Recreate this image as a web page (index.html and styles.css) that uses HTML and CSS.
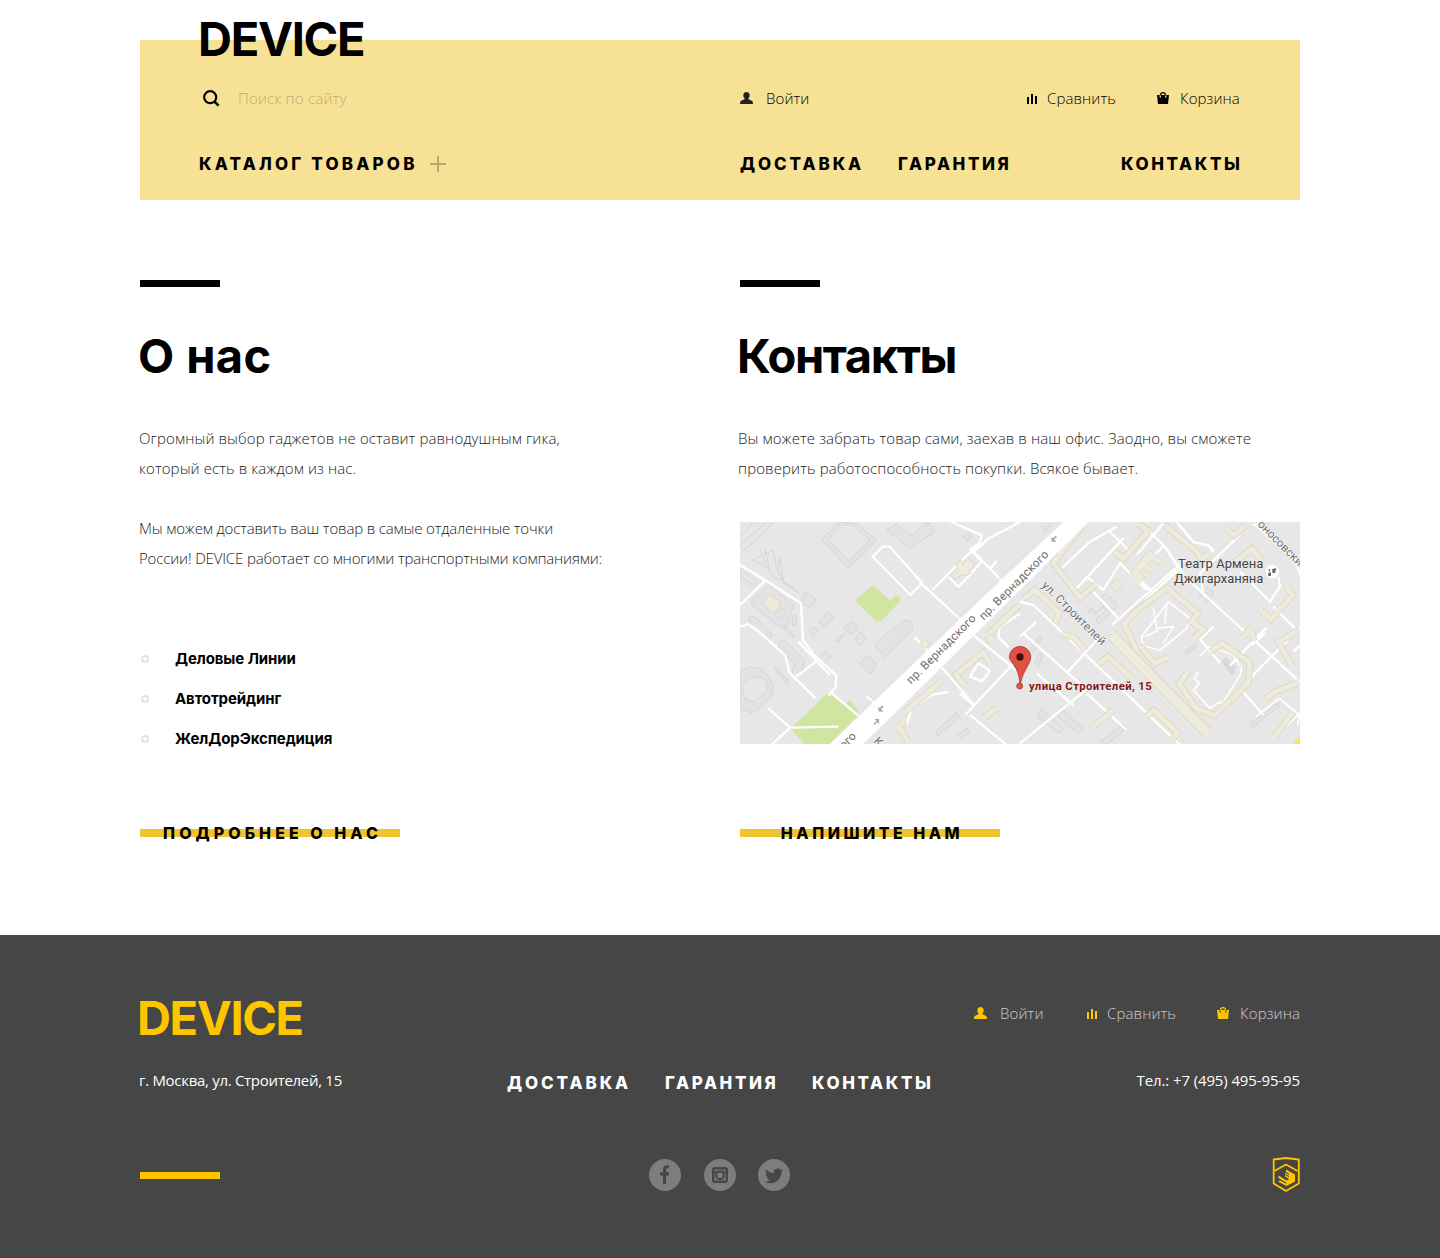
FILE: index.html
```html
<!DOCTYPE html>
<html lang="ru">
<head>
<meta charset="utf-8">
<title>DEVICE</title>
<link rel="stylesheet" href="styles.css">
</head>
<body>
<svg class="sprite" width="0" height="0">
  <symbol id="user" viewBox="0 0 13 12"><path d="M6.500 0C4.500 0 3.300 1.400 3.300 3.200c0 1.300.5 2.300 1.200 2.900v1.100C3.200 7.800.8 8.400.2 10L0 12h13l-.2-2C12.200 8.400 9.800 7.800 8.500 7.200V6.100c.7-.6 1.200-1.600 1.200-2.900C9.700 1.400 8.500 0 6.500 0z"/></symbol>
  <symbol id="bars" viewBox="0 0 10 10"><path d="M0 3h2v7H0zM4 0h2v10H4zM8 2h2v8H8z"/></symbol>
  <symbol id="bag" viewBox="0 0 12 12"><path fill-rule="evenodd" d="M0 3h2.600v2.500h1.300V3h4.200v2.500h1.300V3H12l-1 9H1z"/><path d="M3.400 3.500C3.400 1.500 4.300.6 6 .6s2.600.9 2.600 2.900" fill="none" stroke="currentColor" stroke-width="1.200"/></symbol>
</svg>
<header class="header">
  <a class="logo">DEVICE</a>
  <div class="tools">
    <label class="search"><svg width="17" height="17" viewBox="0 0 17 17"><circle cx="7.200" cy="7.200" r="6" fill="none" stroke="#000" stroke-width="2.200"/><path d="M11.300 11.300l4.300 4.300" stroke="#000" stroke-width="2.600"/></svg><span class="placeholder">Поиск по сайту</span></label>
    <a class="tool tool-login"><svg width="13" height="12"><use href="#user"/></svg><span>Войти</span></a>
    <a class="tool tool-compare"><svg width="10" height="10"><use href="#bars"/></svg><span>Сравнить</span></a>
    <a class="tool tool-cart"><svg width="12" height="12"><use href="#bag"/></svg><span>Корзина</span></a>
  </div>
  <nav class="nav">
    <a class="catalog"><span>КАТАЛОГ ТОВАРОВ</span><svg width="16" height="16" viewBox="0 0 16 16"><path d="M8 0v16M0 8h16" stroke="#b9a96e" stroke-width="2"/></svg></a>
    <a class="n-delivery">ДОСТАВКА</a>
    <a class="n-warranty">ГАРАНТИЯ</a>
    <a class="n-contacts">КОНТАКТЫ</a>
  </nav>
</header>
<main class="main">
  <section class="col">
    <h1>О нас</h1>
    <p><span class="wide">Огромный выбор гаджетов не оставит равнодушным гика,</span><br><span class="wide">который есть в каждом из нас.</span></p>
    <p class="tight">Мы можем доставить ваш товар в самые отдаленные точки<br>России! DEVICE работает со многими транспортными компаниями:</p>
    <ul class="partners">
      <li>Деловые Линии</li>
      <li>Автотрейдинг</li>
      <li>ЖелДорЭкспедиция</li>
    </ul>
    <a class="button button-about">ПОДРОБНЕЕ О НАС</a>
  </section>
  <section class="col">
    <h1 class="h-contacts">Контакты</h1>
    <p class="shift wide">Вы можете забрать товар сами, заехав в наш офис. Заодно, вы сможете<br>проверить работоспособность покупки. Всякое бывает.</p>
    <svg class="map" width="560" height="222" viewBox="0 6 1680 666">
      <defs>
        <g id="blocks">
          <path d="M1025 18L940 128l80 105 50-42M1122 95l28 22 75-85-30-20M1190 390l-38-78 40-42 88-66 94 76-20 25 36 24-34 34M1200 378l44 52 44-20M1412 395l34-25 84 58-6 62-100 97-55-22-52-75 28-35M1640 200l18 26-66 72-34-32M1482 128l54-42 32 38M1275 16l92 76 18 26 28-22M1462 28l22 18 30-28M1678 328l-62 38 38 68M1576 538l28-22 74-30M1075 432l30-22 72 66M1218 590l24-20 70 68-18 24M966 342l36 10 34 40M852 236l32-26 74 68-12 32M1062 618l60-50M1508 352l26-28M1534 330l8 32M1600 655l60-80"/>
          <path d="M742 345l98-92M672 496l-24-32 82-66 18 30M488 582l118-100M462 632l32-30M476 618l30 50M734 592l36-28"/>
        </g>
      </defs>
      <rect y="6" width="1680" height="666" fill="#e7e7e7"/>
      <!-- grey buildings -->
      <g fill="#e3e3e3" stroke="#d5d5d5" stroke-width="3">
        <path d="M244 57L300 6l50 4 60 52-85 84z"/><path fill="#e7e7e7" d="M262 58l46-44 32 1 50 47-65 60z"/>
        <path d="M440 30l70 55 74-50-20-29-14 12-36 28-45-34zM672 50l15-12 12 9-18 17z"/>
        <path fill="none" d="M0 100l60-50 40-44M40 6L0 50M0 75L80 6M40 120l60-30 10 60 20 30-25-5-20-30zM0 145l50 40-12 22-38-30zM0 165l40 32M118 112l14 75 26 14 18 20-45-32-16-35zM60 90l25 60M75 90l15 60"/>
        <path d="M36 240l50-45 75 60-20 65-30-5-75-60z"/><path d="M180 245l15-25 20 5 15 18-24 20zM105 282l20-20 16 17-25 20zM157 288h13v28h-13z"/>
        <path d="M237 306l30-31 13 18-30 29zM207 332l15-12 14 13-18 15zM312 326l25-22 20 18-22 23zM343 358l20-22 16 18-20 24zM282 362l32-20-14 22z"/>
        <path d="M404 375l25-25 66-50 20 6 4 22-85 84zM359 430l20-20 8-4 22 27-18 30z"/>
        <path d="M25 300l10-14 20 14 12 17 30 25-9 17-50-40zM126 312l38 34-5 7-38-34zM117 365l15-7 62 65-8 32-20 17-10-15 8-27-45-42zM233 418l22-23 20 14-22 24zM106 442l43 44-7 6-38-45z"/>
        <path d="M0 455l30-14 40 8 30 45-3 30-30 35-30 20-37-12z"/><path fill="#e7e7e7" d="M5 500l30-32 40 8 10 28-38 43-30-8z"/>
        <path d="M586 635l65-58 7 15-65 54zM654 646l24-21 10 10-22 21z"/>
        <path d="M1044 276l10-12 16 14 20-19-12-22 20-17 38 36-60 55-10-12 32-28-10-10-22 20zM1377 222l25-23 18 18-15 29-10-6 10-20-10-4-10 15zM1335 395l28-22 4 8-26 22zM890 590l15-25 65 60-12 14zM950 588l18-18 62 55-14 16zM860 405l40-60 6 8-38 62zM1530 612l85-64 6 8-84 66zM885 430l15-30 10 7-16 32zM1080 665l70-52 10 10-55 49z"/>
        <path fill="#d9d9d9" d="M1446 425l12-10 30 28-12 22z"/>
      </g>
      <!-- parks -->
      <path fill="#d0e5a0" d="M349 246q-2-8 5-14l38-31q7-4 14 1l43 38q9-2 18-14 16-4 13 18l-54 57q-11 8-22 0z"/>
      <path fill="#d0e5a0" d="M152 625l117-111 50 37 8-11 29 30-4 20-84 82h-75z"/>
      <!-- minor streets -->
      <g fill="none" stroke="#fff" stroke-width="7" stroke-linejoin="round">
        <path d="M0 135l75 45 108 70 6 110 30 42 70 65-2 35-22 25M0 255l75-72M0 320l24-8 30 20 82 75 12 50 78 78M168 470l60-45M85 565l65 58-65 60M175 365l95 100M268 514l90 75M150 623l145-3M380 530l25 20"/>
        <path d="M398 110l30-30 20-1 98 110-35 36zM540 187l125 115M577 210l142-142M600 -10l125 56-6 24-26 17 92 95M690 85l35 40-70 76-28-30M840 6l-95 50-50 45M525 352l40 42M770 124l-20 22"/>
        <path d="M700 345l140 115M605 442l95 110M700 555L660 520M840 410l-165 175M690 585l110 90M840 280l-62 42-2 30 30 30M500 614l15-50 60-40 50-8M690 470l25-40 35 22-24 32z"/>
        <path d="M960 150l90-85 80-45M960 150l50 55 140-150M840 245l40 10 200 190 240 230M1105 30l60 60-75 120-50-40M1140 130l80 80M850 340l180 160M840 350l50-45M980 460l90-100M1050 500l-210 170M890 460l110 95M1040 520l120 110M1115 315l220-195M1060 215l75 80"/>
        <path d="M1200 6l75 75 60 90 350 320M1310 6l50 60 45 10 15 15-25 20M1270 10l-80 95M1270 80l-90 80 60 60M1325 140l-110 100M1500 45l-120 115 10 60M1420 320l-40 38 60 70M1580 322l-110 115M1680 322L1500 505l70 80M1540 10l125 110 15 44M1600 260l80 80M1500 155l90 90 30-45-5-30M1535 375l40-35M1660 395l20-20"/>
        <path stroke-width="5" d="M1205 350l80-105 65 50-10 30-80 65-50-12zM1240 265l10 60 50-5-30 50M1255 330l-40 20M1280 250l-5 60"/>
        <path stroke-width="5" d="M1375 455l-12 20 15 15-18 20 50 55 30-20 5 10 55-90 5-20-25-40-70-25-30 28M1690 570l-90 85M1548 590l70-55 60 50-5 30"/>
      </g>
      <!-- cream buildings -->
      <use href="#blocks" class="block-edge"/><use href="#blocks" class="block-fill"/>
      <path d="M1114 345L1404 640" class="slab-edge"/><path d="M1114 345L1404 640" class="slab-fill"/>
      <g fill="#eeeadc" stroke="#dcd6bf" stroke-width="2.500">
        <path d="M69 250l18-24 32 17-2 22-22 12zM635 170q-2-19 16-21l-2-21 13-8 9 14a15 15 0 1 1 15 15l6 11-14 7-17-2a15 15 0 0 1-26 5zM540 370l15-14 13 15-15 15zM734 355l16-14 16 14-18 16z"/>
        <path d="M1169 160l60-72 36 34-14 13-15-14-11 11 15 16-11 13-18-15-10 12 14 14-16 18zM1111 196l16-16 22 15-19 22zM920 20l20-14-30 32z"/>
      </g>
      <!-- avenue -->
      <path fill="#fff" d="M270 672L720 240 970 6h75L850 200 370 672z"/>
      <path d="M290 645L780 172 952 6" fill="none" stroke="#e0e0e0" stroke-width="3"/>
      <path d="M1655 672l25-24v24z" fill="#f6e36c"/>
      <g fill="#a9aac4"><path d="M413 561l4 14 14-1-8-6 8-8-4-4-8 8zM417 596l-14 1 7 6-10 8 4 4 9-8 5 5zM933 52l2 13 14 1-6-8 8-7-4-4-8 8z"/></g>
      <g class="street">
        <text transform="translate(513 494) rotate(-45)" textLength="278">пр. Вернадского</text>
        <text transform="translate(731 302) rotate(-45)" textLength="278">пр. Вернадского</text>
        <text transform="translate(312 689) rotate(-45)">ого</text>
        <text transform="translate(904 198) rotate(45)" textLength="254">ул. Строителей</text>
        <text transform="translate(1551 15) rotate(45)">оносовски</text>
        <text transform="translate(399 665) rotate(45)">К</text>
      </g>
      <g class="place"><text x="1314" y="145" textLength="256">Театр Армена</text><text x="1302" y="190" textLength="268">Джигарханяна</text></g>
      <circle cx="1597" cy="155" r="22" fill="#fff" stroke="#ddd" stroke-width="2"/><path d="M1584 160l9-4v12h-8zM1596 148l12-4-2 14-8 2zM1584 151l7-5-2 9z" fill="#75645d"/>
      <path d="M840 504c0-65-32-77-32-93a32 32 0 0 1 64 0c0 25-27 41-32 93z" fill="#df5147" stroke="#9c3129" stroke-width="2"/><circle cx="840" cy="411" r="11" fill="#43100b"/><circle cx="839" cy="498" r="9" fill="#d75950" stroke="#8f3029" stroke-width="2"/>
      <text class="address" x="867" y="510" textLength="368">улица Строителей, 15</text>
    </svg>
    <a class="button button-write">НАПИШИТЕ НАМ</a>
  </section>
</main>
<footer class="footer">
  <div class="inner">
    <div class="ftop">
      <a class="logo">DEVICE</a>
      <div class="ftools">
        <a class="tool tool-login"><svg width="13" height="12"><use href="#user"/></svg><span>Войти</span></a>
        <a class="tool tool-compare"><svg width="10" height="10"><use href="#bars"/></svg><span>Сравнить</span></a>
        <a class="tool tool-cart"><svg width="12" height="12"><use href="#bag"/></svg><span>Корзина</span></a>
      </div>
    </div>
    <div class="fmid">
      <span class="addr">г. Москва, ул. Строителей, 15</span>
      <nav class="fnav"><a class="n-delivery">ДОСТАВКА</a><a class="n-warranty">ГАРАНТИЯ</a><a class="n-contacts">КОНТАКТЫ</a></nav>
      <span class="tel">Тел.: +7 (495) 495-95-95</span>
    </div>
    <div class="fbot">
      <i class="dash"></i>
      <div class="social">
        <svg width="32" height="32" viewBox="0 0 32 32"><circle cx="16" cy="16" r="16" fill="#7d7d7d"/><path fill="#464646" d="M14 25v-8.500h-3v-3.200h3v-2.500c0-3 1.700-4.600 4.300-4.600H20v3.100h-1.500c-1 0-1.400.5-1.400 1.400v2.600h3l-.4 3.200h-2.600V25z"/></svg>
        <svg width="32" height="32" viewBox="0 0 32 32"><circle cx="16" cy="16" r="16" fill="#7d7d7d"/><rect x="9.200" y="9.200" width="13.600" height="13.600" rx="1.500" fill="none" stroke="#464646" stroke-width="2.400"/><path d="M9 13h5M18 13h5" stroke="#464646" stroke-width="1.500"/><circle cx="16" cy="16.300" r="3.900" fill="none" stroke="#464646" stroke-width="2.200"/><path d="M18.500 9.500h4v4h-4z" fill="#464646"/><path d="M19.500 10.700h2v2h-2z" fill="#7d7d7d"/></svg>
        <svg width="32" height="32" viewBox="0 0 32 32"><circle cx="16" cy="16" r="16" fill="#7d7d7d"/><path fill="#464646" d="M25 11.200c-.7.3-1.300.5-2 .6.700-.5 1.200-1.200 1.500-2-.7.400-1.500.7-2.300.9a3.800 3.800 0 0 0-6.400 3.500c-3.100-.2-5.800-1.700-7.600-4a3.800 3.800 0 0 0 1.200 5c-.6 0-1.200-.2-1.700-.5 0 1.800 1.300 3.400 3 3.700-.5.200-1.100.2-1.700.1.500 1.500 1.900 2.600 3.500 2.600A8 8 0 0 1 7 22.700a11 11 0 0 0 5.700 1.600c7 0 10.700-5.800 10.700-10.700v-.5c.6-.5 1.200-1.200 1.600-1.900z"/></svg>
      </div>
      <svg class="academy" width="28" height="36" viewBox="0 0 28 36"><path d="M1.700 2.500L14 1l12.800 1.500V26.500L14 34 1.700 26.500z" fill="none" stroke="#ffc600" stroke-width="1.800"/><path d="M2.500 14L14 7.500 25.500 14" fill="none" stroke="#ffc600" stroke-width="1.800"/><path d="M6.500 18.500l8 5 8.500-5v6L14.500 29 6 24.500l2-1 6.500 3.200v-1L6.500 21z" fill="#ffc600"/><path d="M14 12.500l9 5v2.500l-5 2.500-5-3v-1.500l4 2v-1l-4-2v-1.200l4 2v-1l-3-1.800z" fill="#ffc600"/></svg>
    </div>
  </div>
</footer>
</body>
</html>
```
FILE: styles.css
```css
*, ::before { box-sizing: border-box; }
body { margin: 0; background: #fff; color: #000; font: 300 15px/30px "Open Sans", sans-serif; }
.sprite { display: block; }
svg { fill: currentColor; flex: none; }
.header { width: 1160px; height: 160px; margin: 40px auto 0; padding: 0 60px; background: #f7e195; display: flex; flex-direction: column; }
.logo { display: block; font: 700 47px/60px Inter, sans-serif; letter-spacing: -1.3px; }
.header .logo { margin: -31px 0 0 -2px; }
.tools { display: flex; align-items: center; height: 30px; margin-top: 14px; white-space: nowrap; letter-spacing: .1px; }
.search { display: flex; align-items: center; gap: 18px; width: 540px; padding-left: 3px; }
.search svg { margin-top: 1px; }
.placeholder { color: #bfae70; letter-spacing: .2px; }
.tool { display: flex; align-items: center; }
.tool-login { gap: 13px; width: 287px; }
.tool-login svg { color: #222; }
.tool-compare { gap: 10px; width: 130px; }
.tool-compare svg { margin-top: 2px; }
.tool-cart { gap: 11px; }
.nav { display: flex; margin-top: 36px; }
.nav a { flex: none; }
.nav, .fnav { font: 800 17px/30px Inter, sans-serif; letter-spacing: 2.900px; white-space: nowrap; }
.catalog { display: flex; align-items: center; gap: 12px; width: 541px; margin-left: -1px; letter-spacing: 3.200px; }
.nav .n-delivery { width: 158px; }
.nav .n-warranty { width: 223px; }
.n-warranty, .n-contacts { letter-spacing: 2.600px; }

.main { width: 1160px; margin: 80px auto 0; display: flex; gap: 40px; }
.col { width: 560px; }
.col::before { content: ""; display: block; width: 80px; height: 7px; background: #000; }
h1 { margin: 39px 0 37px -2px; font: 700 47px/60px Inter, sans-serif; letter-spacing: .4px; white-space: nowrap; }
.h-contacts { margin-left: -3px; letter-spacing: -1.400px; }
p { margin: 0 0 30px -1px; white-space: nowrap; color: #222; }
.wide { letter-spacing: .11px; }
.tight { letter-spacing: -.15px; }
.shift { margin-left: -2px; margin-bottom: 39px; }
.partners { list-style: none; margin: 66px 0 0; padding: 0; font: 700 15px/40px Inter, sans-serif; letter-spacing: -.1px; }
.partners li { display: flex; align-items: center; gap: 26px; padding-left: 1px; }
.partners li::before { content: ""; width: 8px; height: 8px; border: 2px solid #e2e2e2; border-radius: 50%; }
.button { display: flex; justify-content: center; align-items: center; width: 260px; height: 30px; margin-top: 59px; background: linear-gradient(#efc42f, #efc42f) 0 11px / 100% 8px no-repeat; font: 800 16px/30px Inter, sans-serif; letter-spacing: 3.500px; white-space: nowrap; }
.button-about { letter-spacing: 4.050px; padding-left: 5px; }
.button-write { padding-left: 4px; }
.map { display: block; }
.map + .button { margin-top: 74px; }
.block-edge, .block-fill { fill: none; stroke: #dcd6bf; stroke-width: 20px; }
.block-fill { stroke: #eeeadc; stroke-width: 15px; }
.slab-edge { stroke: #dcd6bf; stroke-width: 34px; }
.slab-fill { stroke: #eeeadc; stroke-width: 29px; }
.street { font: 400 35px Roboto, sans-serif; fill: #6c6c6c; stroke: #fff; stroke-width: 3px; paint-order: stroke; }
.place { font: 400 39px Roboto, sans-serif; fill: #444; stroke: #eee; stroke-width: 3px; paint-order: stroke; }
.address { font: 700 34px Roboto, sans-serif; fill: #831915; stroke: #eee; stroke-width: 3px; paint-order: stroke; }

.footer { height: 323px; margin-top: 87px; background: #464646; color: #fff; }
.inner { width: 1160px; margin: 0 auto; padding-top: 53px; }
.ftop { display: flex; justify-content: space-between; height: 77px; }
.ftop .logo { color: #ffc600; margin-left: -3px; letter-spacing: -1.400px; }
.ftools { display: flex; height: 30px; margin-top: 10px; color: #ccc; letter-spacing: .1px; }
.ftools svg { color: #ffc600; }
.ftools .tool-login { width: 113px; }
.fmid { display: flex; align-items: center; height: 30px; font-weight: 400; white-space: nowrap; }
.addr { width: 368px; margin-left: -1px; letter-spacing: -.3px; }
.fnav { display: flex; margin-top: 6px; width: 430px; }
.fnav .n-delivery { width: 158px; }
.fnav .n-warranty { width: 147px; }
.tel { width: 363px; text-align: right; letter-spacing: -.12px; }
.fbot { display: flex; justify-content: space-between; align-items: center; height: 36px; margin-top: 62px; }
.dash { width: 80px; height: 7px; background: #ffc600; }
.social { display: flex; gap: 22.500px; margin-left: -53px; }
```
